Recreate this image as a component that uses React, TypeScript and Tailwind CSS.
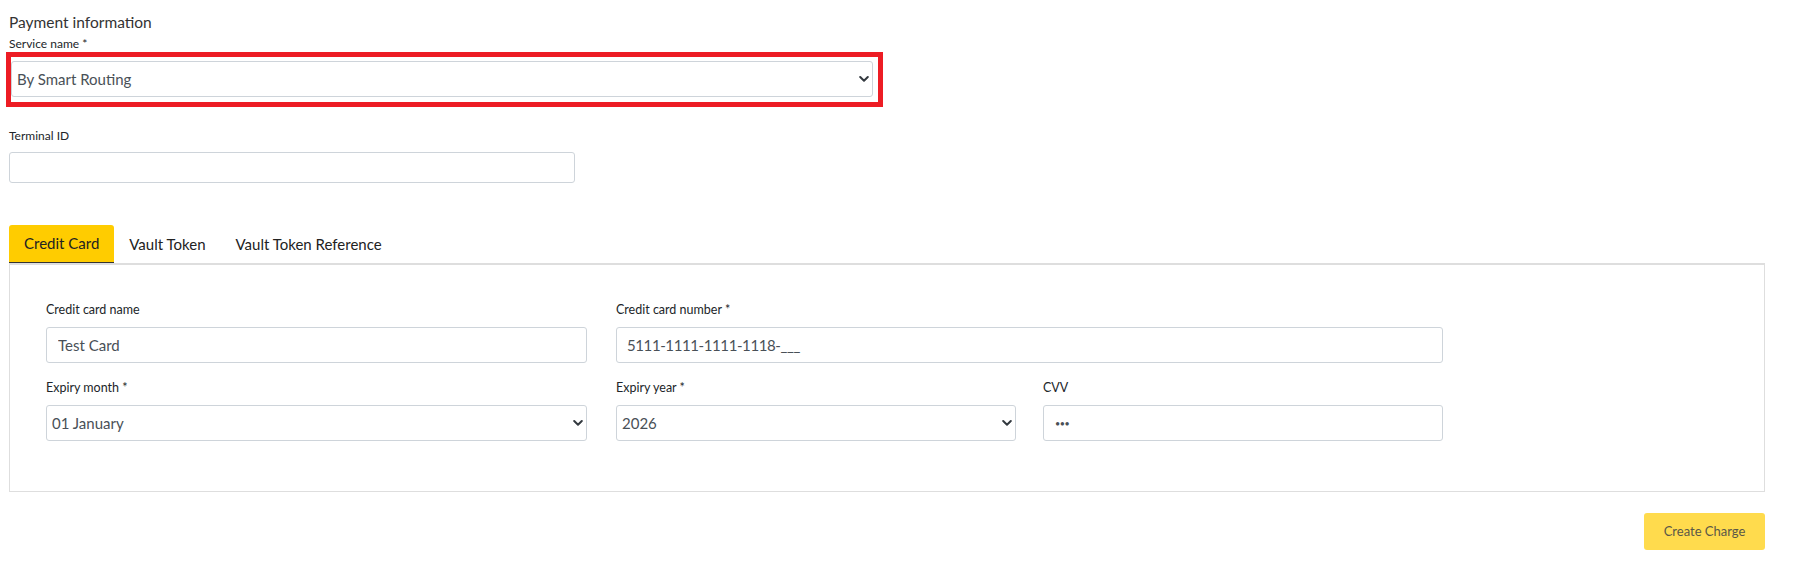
import React from "react";

const labelCls = "block text-[12.5px] leading-[16px] text-[#212529] mb-[9px]";
const fieldCls =
  "w-full h-[36px] border border-[#ced4da] rounded-[3px] bg-white text-[15px] text-[#495057] outline-none";

function Chevron() {
  return (
    <svg
      width="10"
      height="7"
      viewBox="0 0 10 7"
      className="pointer-events-none absolute right-[4px] top-1/2 -translate-y-1/2"
    >
      <path
        d="M1.2 1.5l3.8 3.8 3.8-3.8"
        fill="none"
        stroke="#343a40"
        strokeWidth="2"
        strokeLinecap="round"
        strokeLinejoin="round"
      />
    </svg>
  );
}

function Select({ value, className = "" }: { value: string; className?: string }) {
  return (
    <div className={"relative " + className}>
      <select
        defaultValue={value}
        className={fieldCls + " appearance-none pl-[5px] pr-[20px]"}
      >
        <option>{value}</option>
      </select>
      <Chevron />
    </div>
  );
}

function Field({ label, children, className = "" }: { label: string; children: React.ReactNode; className?: string }) {
  return (
    <div className={className}>
      <label className={labelCls}>{label}</label>
      {children}
    </div>
  );
}

export default function App() {
  const tabs = ["Credit Card", "Vault Token", "Vault Token Reference"];

  return (
    <main className="w-[1805px] h-[585px] bg-white font-['Lato',sans-serif] text-[#333]">
      <div className="pl-[9px] pr-[40px] pt-[12px]">
        <h2 className="text-[15.5px] leading-[20px] text-[#333]">Payment information</h2>
        <label className="block text-[12px] leading-[16px] text-[#212529] mt-[4px]">Service name *</label>

        <div className="-ml-[3px] w-[877px] border-[5px] border-[#ed1c24] pt-[4px] pr-[5px] pb-[5px]">
          <Select value="By Smart Routing" />
        </div>

        <label className="block text-[12px] leading-[16px] text-[#212529] mt-[21px]">Terminal ID</label>
        <input
          type="text"
          className="mt-[8px] block w-[566px] h-[31px] border border-[#ced4da] rounded-[3px] outline-none"
        />

        <div className="mt-[42px]">
          <div className="flex items-end border-b-2 border-[#dedede]">
            {tabs.map((t, i) => (
              <div
                key={t}
                className={
                  i === 0
                    ? "h-[38px] px-[15px] flex items-center rounded-t-[3px] bg-[#ffcc00] text-[15px] text-[#222] border-b border-[#333]"
                    : "h-[38px] px-[15px] flex items-center text-[15px] text-[#222]"
                }
              >
                {t}
              </div>
            ))}
          </div>

          <div className="border border-t-0 border-[#dedede] pt-[37px] pb-[50px] px-[36px]">
            <div className="flex">
              <Field label="Credit card name" className="w-[541px]">
                <input type="text" defaultValue="Test Card" className={fieldCls + " pl-[11px]"} />
              </Field>
              <Field label="Credit card number *" className="w-[827px] ml-[29px]">
                <input
                  type="text"
                  defaultValue="5111-1111-1111-1118-___"
                  className={fieldCls + " pl-[10px] tracking-[-0.4px]"}
                />
              </Field>
            </div>

            <div className="flex mt-[17px]">
              <Field label="Expiry month *" className="w-[541px]">
                <Select value="01 January" />
              </Field>
              <Field label="Expiry year *" className="w-[400px] ml-[29px]">
                <Select value="2026" />
              </Field>
              <Field label="CVV" className="w-[400px] ml-[27px]">
                <input
                  type="text"
                  defaultValue="•••"
                  className={fieldCls + " pl-[11px] !text-[9px] tracking-[-0.5px]"}
                />
              </Field>
            </div>
          </div>

          <div className="flex justify-end mt-[21px]">
            <button
              type="button"
              className="w-[121px] h-[37px] rounded-[3px] bg-[#ffdb4d] text-[13px] text-[#5a5748]"
            >
              Create Charge
            </button>
          </div>
        </div>
      </div>
    </main>
  );
}
